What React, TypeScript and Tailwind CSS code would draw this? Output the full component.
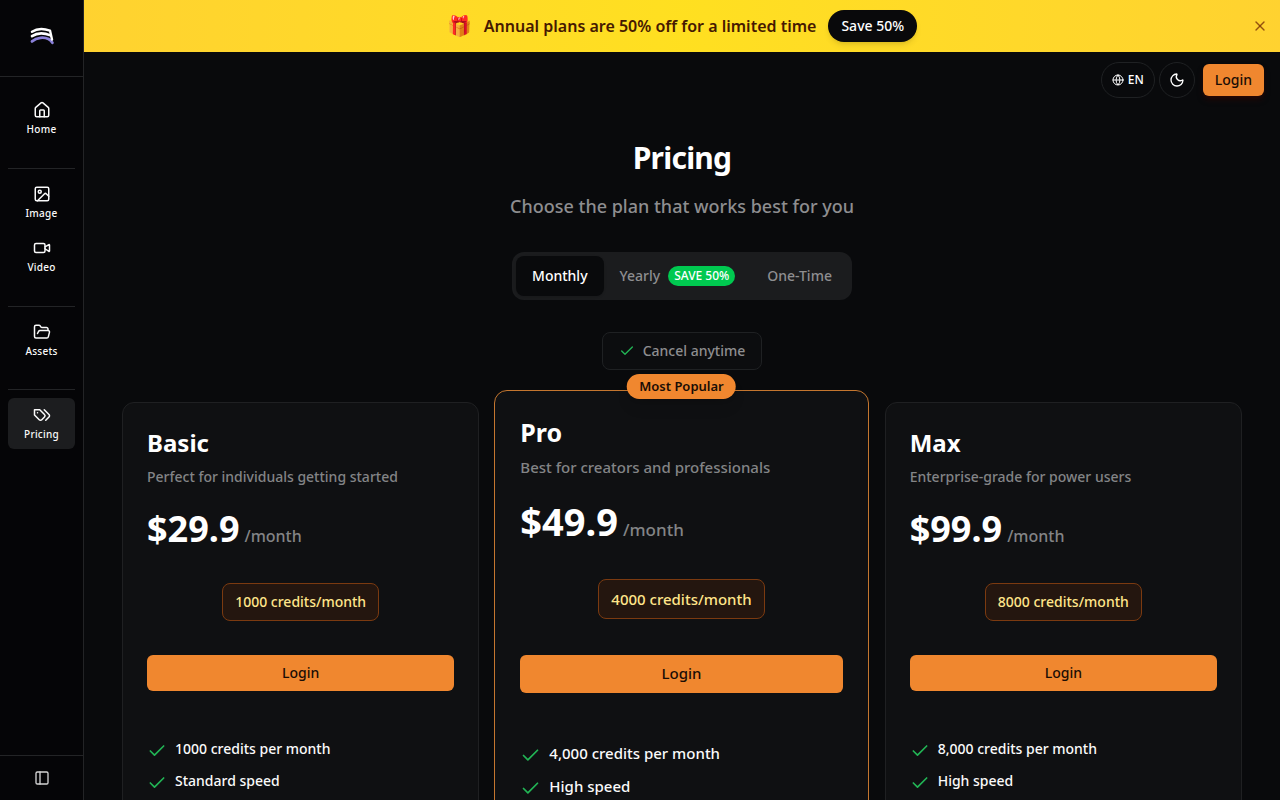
import {
  Check,
  FolderOpen,
  Globe,
  House,
  Image,
  Moon,
  PanelLeft,
  Video,
  X,
} from "lucide-react";
import type { ComponentType } from "react";

interface IconProps {
  size?: number | string;
}

interface NavItemProps {
  icon: ComponentType<IconProps>;
  label: string;
  active?: boolean;
}

interface Plan {
  name: string;
  description: string;
  price: string;
  credits: string;
  features: string[];
  popular?: boolean;
}

const plans: Plan[] = [
  {
    name: "Basic",
    description: "Perfect for individuals getting started",
    price: "$29.9",
    credits: "1000 credits/month",
    features: ["1000 credits per month", "Standard speed"],
  },
  {
    name: "Pro",
    description: "Best for creators and professionals",
    price: "$49.9",
    credits: "4000 credits/month",
    features: ["4,000 credits per month", "High speed"],
    popular: true,
  },
  {
    name: "Max",
    description: "Enterprise-grade for power users",
    price: "$99.9",
    credits: "8000 credits/month",
    features: ["8,000 credits per month", "High speed"],
  },
];

function Logo() {
  return (
    <svg width="26" height="20" viewBox="0 0 26 20" fill="none" strokeLinecap="round" strokeLinejoin="round">
      <path d="M3 15.4C8 11.2 15 10.8 19.5 13.1C21.5 14.2 22.6 15.6 23.4 16.8" stroke="#8a80d8" strokeWidth="2.8" />
      <path d="M3 10.2C8 6.8 14.5 6.6 21.500 9.400" stroke="#fff" strokeWidth="2.6" />
      <path d="M3 5.8C8 2.4 14.500 2.400 21 4.600L23 13.500" stroke="#fff" strokeWidth="2.4" />
    </svg>
  );
}

function TagsIcon({ size = 24 }: IconProps) {
  return (
    <svg
      width={size}
      height={size}
      viewBox="0 0 24 24"
      fill="none"
      stroke="currentColor"
      strokeWidth="2"
      strokeLinecap="round"
      strokeLinejoin="round"
    >
      <path d="M9 5H2v7l6.290 6.290c.940.940 2.480.940 3.420 0l3.580-3.580c.940-.940.940-2.480 0-3.420L9 5Z" />
      <path d="M6 9.010V9" />
      <path d="m15 5 6.300 6.300a2.400 2.400 0 0 1 0 3.400L17 19" />
    </svg>
  );
}

function NavItem({ icon: Icon, label, active }: NavItemProps) {
  return (
    <a
      href="#"
      className={`flex flex-col items-center gap-[3px] rounded-md pt-2 pb-[7px] text-[10px] leading-[15px] font-medium tracking-wide text-neutral-50 ${
        active ? "bg-[#1c1d1f]" : ""
      }`}
    >
      <Icon size={18} />
      {label}
    </a>
  );
}

function Sidebar() {
  return (
    <aside className="flex w-[84px] shrink-0 flex-col border-r border-[#232426] bg-[#050507]">
      <div className="flex h-[77px] items-center justify-center border-b border-[#232426] pb-1">
        <a href="#" aria-label="Homepage">
          <Logo />
        </a>
      </div>
      <nav className="flex flex-1 flex-col px-2 pt-4">
        <div className="pb-6">
          <NavItem icon={House} label="Home" />
        </div>
        <div className="flex flex-col gap-[3px] border-t border-[#232426] pt-2 pb-6">
          <NavItem icon={Image} label="Image" />
          <NavItem icon={Video} label="Video" />
        </div>
        <div className="border-t border-[#232426] pt-2 pb-[23px]">
          <NavItem icon={FolderOpen} label="Assets" />
        </div>
        <div className="border-t border-[#232426] pt-2">
          <NavItem icon={TagsIcon} label="Pricing" active />
        </div>
      </nav>
      <div className="flex h-[45px] items-center justify-center border-t border-[#232426]">
        <button aria-label="Toggle sidebar" className="text-neutral-300">
          <PanelLeft size={16} />
        </button>
      </div>
    </aside>
  );
}

function Banner() {
  return (
    <div className="flex h-[52px] shrink-0 items-center bg-linear-to-r from-amber-300 via-yellow-300 to-amber-300 px-3">
      <div className="flex flex-1 items-center justify-center gap-3 pl-4">
        <span className="text-xl">🎁</span>
        <p className="font-semibold text-[#461901]">Annual plans are 50% off for a limited time</p>
        <button className="h-8 rounded-full bg-[#09090b] px-[13px] text-sm font-medium text-white shadow-md">
          Save 50%
        </button>
      </div>
      <button aria-label="Close" className="text-[#7b3306]/80">
        <X size={16} />
      </button>
    </div>
  );
}

function Toolbar() {
  return (
    <header className="flex h-14 items-center justify-end px-4">
      <button className="mr-1 flex h-9 items-center gap-1 rounded-full border border-[#1f2123] px-[10px] text-xs font-medium text-white">
        <Globe size={12} />
        EN
      </button>
      <button
        aria-label="Dark mode"
        className="mr-2 flex size-9 items-center justify-center rounded-full border border-[#1f2123] text-white"
      >
        <Moon size={16} />
      </button>
      <button className="h-8 rounded-md bg-[#f0872f] px-3 text-sm font-medium text-[#1a0d05] shadow-md shadow-[#3a0800]/60">
        Login
      </button>
    </header>
  );
}

function BillingTabs() {
  return (
    <div className="flex h-12 items-center rounded-xl bg-[#1b1c1e] p-1 text-sm font-medium text-[#8e8e90]">
      <button className="h-10 rounded-lg bg-[#090a0c] px-4 text-white shadow-sm">Monthly</button>
      <button className="flex h-10 items-center gap-2 px-4">
        Yearly
        <span className="rounded-full bg-[#00c950] px-[6px] py-[2px] text-xs text-white">SAVE 50%</span>
      </button>
      <button className="h-10 px-4">One-Time</button>
    </div>
  );
}

function PlanCard({ plan }: { plan: Plan }) {
  // the popular plan is drawn one step larger than its neighbours
  const big = plan.popular;

  return (
    <section
      className={`relative flex flex-col border bg-[#0f1012] ${
        big
          ? "-mt-3 -mr-2 -ml-[9px] h-[526px] rounded-[13px] border-[#c4762f] px-[25px] pt-6 text-[15px]"
          : "h-[500px] rounded-xl border-[#1f2022] px-6 pt-6 text-sm"
      }`}
    >
      {plan.popular && (
        <span className="absolute -top-[17px] left-1/2 -translate-x-1/2 rounded-full bg-[#f0872f] px-3 py-[3px] text-[13px] leading-[19px] font-semibold whitespace-nowrap text-[#1a0d05] shadow-lg">
          Most Popular
        </span>
      )}

      <h2 className={`font-bold text-white ${big ? "text-[25px] leading-[34px]" : "text-2xl"}`}>{plan.name}</h2>
      <p className="mt-2 leading-5 font-medium text-[#838486]">{plan.description}</p>

      <p className={`flex items-baseline gap-[5px] ${big ? "mt-[23px]" : "mt-[22px]"}`}>
        <span className={`font-bold text-white ${big ? "text-[38px] leading-[42px]" : "text-4xl"}`}>{plan.price}</span>
        <span className={`font-medium text-[#838486] ${big ? "text-[17px]" : "text-base"}`}>/month</span>
      </p>

      <div
        className={`self-center rounded-lg border border-[#7b3a10] bg-[#24160f] px-3 leading-5 font-medium text-[#ffe58a] ${
          big ? "mt-9 py-[9px]" : "mt-[34px] py-2"
        }`}
      >
        {plan.credits}
      </div>

      <button
        className={`rounded-md bg-[#f0872f] font-medium text-[#1a0d05] ${big ? "mt-9 h-[38px]" : "mt-[34px] h-9"}`}
      >
        Login
      </button>

      <ul className={`flex flex-col font-medium text-neutral-50 ${big ? "mt-[50px] gap-[13px]" : "mt-12 gap-3"}`}>
        {plan.features.map((feature) => (
          <li key={feature} className="flex h-5 items-start gap-2 leading-5">
            <Check size={big ? 21 : 20} className="mt-[2px] shrink-0 text-[#22b455]" />
            {feature}
          </li>
        ))}
      </ul>
    </section>
  );
}

function App() {
  return (
    <div className="flex h-screen bg-[#090a0c] font-['Noto_Sans',sans-serif] text-white">
      <Sidebar />
      <div className="flex min-w-0 flex-1 flex-col">
        <Banner />
        <main className="flex-1 overflow-y-auto [scrollbar-width:none]">
          <Toolbar />
          <div className="mx-auto flex max-w-[1120px] flex-col items-center pt-8 pb-12">
            <h1 className="text-3xl font-bold tracking-tight">Pricing</h1>
            <p className="mt-4 text-lg font-medium text-[#8e8e90]">Choose the plan that works best for you</p>
            <div className="mt-8">
              <BillingTabs />
            </div>
            <p className="mt-8 flex items-center gap-2 rounded-lg border border-[#1f2123] bg-[#0c0d0f] px-4 py-2 text-sm leading-5 font-medium text-[#8e8e90]">
              <Check size={16} className="text-[#22b455]" />
              Cancel anytime
            </p>
            <div className="mt-8 grid w-full grid-cols-3 items-start gap-6">
              {plans.map((plan) => (
                <PlanCard key={plan.name} plan={plan} />
              ))}
            </div>
          </div>
        </main>
      </div>
    </div>
  );
}

export default App;
